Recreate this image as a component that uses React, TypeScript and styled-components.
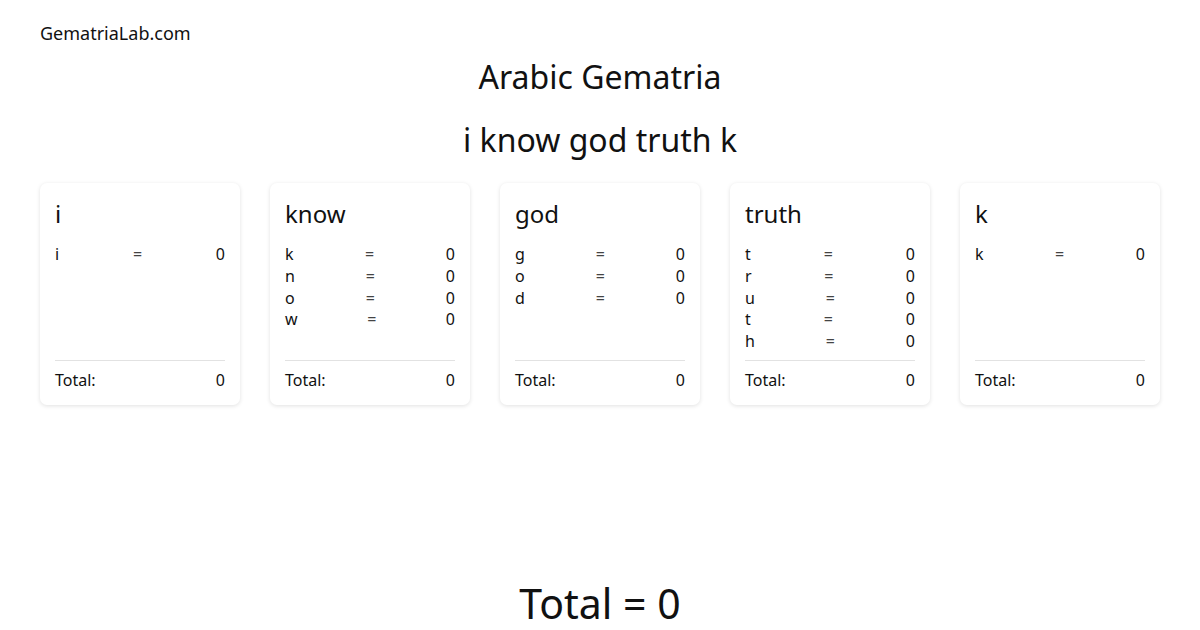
import React from "react";
import styled, { createGlobalStyle } from "styled-components";

const Global = createGlobalStyle`
  html, body { margin: 0; padding: 0; background: #fff; }
  body { font-family: "Noto Sans", "Open Sans", sans-serif; color: #111; }
`;

const Page = styled.div`
  box-sizing: border-box;
  height: 630px;
  padding: 0 40px;
  display: flex;
  flex-direction: column;
`;

const Brand = styled.div`
  font-size: 18px;
  line-height: 24px;
  padding-top: 21px;
  color: #111;
`;

const Heading = styled.h1`
  margin: 10px 0 0;
  font-size: 32px;
  font-weight: 400;
  line-height: 44px;
  text-align: center;
`;

const Phrase = styled.h2`
  margin: 19px 0 0;
  font-size: 32px;
  font-weight: 400;
  line-height: 44px;
  text-align: center;
`;

const Cards = styled.div`
  margin-top: 21px;
  display: grid;
  grid-template-columns: repeat(5, 200px);
  gap: 30px;
`;

const Card = styled.div`
  box-sizing: border-box;
  background: #fff;
  border-radius: 7px;
  box-shadow: 0 1px 4px rgba(0, 0, 0, 0.12);
  padding: 15px 15px 14px;
  display: flex;
  flex-direction: column;
`;

const CardTitle = styled.div`
  font-size: 24px;
  line-height: 32px;
  margin-bottom: 14px;
`;

const Rows = styled.div`
  flex: 1;
  min-height: 109px;
  display: flex;
  flex-direction: column;
`;

const Row = styled.div`
  display: flex;
  justify-content: space-between;
  font-size: 16px;
  line-height: 21.8px;
  color: #111;
`;

const Eq = styled.span`
  color: #444;
`;

const Divider = styled.div`
  height: 1px;
  background: #e2e2e2;
  margin-top: 7px;
`;

const TotalRow = styled.div`
  display: flex;
  justify-content: space-between;
  font-size: 16px;
  line-height: 22px;
  margin-top: 8px;
`;

const Grand = styled.div`
  margin-top: auto;
  font-size: 41px;
  line-height: 54px;
  text-align: center;
`;

const words = ["i", "know", "god", "truth", "k"];

export default function App() {
  return (
    <>
      <Global />
      <Page>
        <Brand>GematriaLab.com</Brand>
        <Heading>Arabic Gematria</Heading>
        <Phrase>{words.join(" ")}</Phrase>
        <Cards>
          {words.map((w, i) => (
            <Card key={i}>
              <CardTitle>{w}</CardTitle>
              <Rows>
                {w.split("").map((c, j) => (
                  <Row key={j}>
                    <span>{c}</span>
                    <Eq>=</Eq>
                    <span>0</span>
                  </Row>
                ))}
              </Rows>
              <Divider />
              <TotalRow>
                <span>Total:</span>
                <span>0</span>
              </TotalRow>
            </Card>
          ))}
        </Cards>
        <Grand>Total = 0</Grand>
      </Page>
    </>
  );
}
